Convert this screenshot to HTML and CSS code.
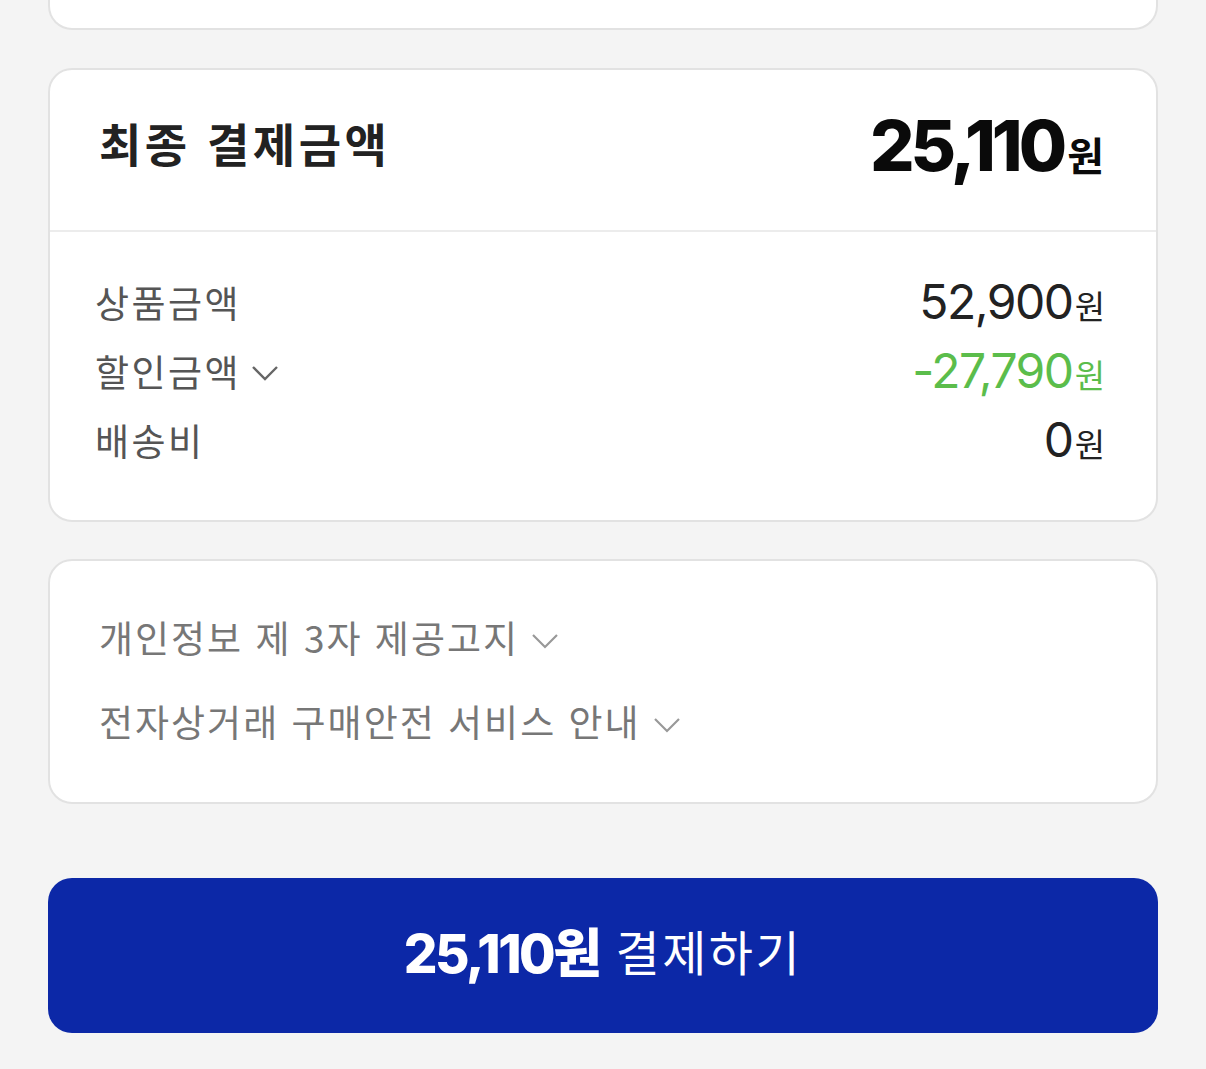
FILE: index.html
```html
<!DOCTYPE html>
<html lang="ko">
<head>
<meta charset="utf-8">
<link rel="stylesheet" href="styles.css">
</head>
<body>
<div class="page">
  <div class="card card-top"></div>

  <div class="card summary">
    <div class="summary-head">
      <span class="head-title">최종 결제금액</span>
      <span class="head-amount"><span class="num">25,110</span><span class="won">원</span></span>
    </div>
    <div class="summary-body">
      <div class="row">
        <span class="label">상품금액</span>
        <span class="value"><span class="num">52,900</span><span class="won">원</span></span>
      </div>
      <div class="row">
        <span class="label">할인금액<svg class="chev" viewBox="0 0 28 18" width="28" height="18"><path d="M2 3 L14 15 L26 3" fill="none" stroke="#666" stroke-width="2.4"/></svg></span>
        <span class="value green"><span class="num">-27,790</span><span class="won">원</span></span>
      </div>
      <div class="row">
        <span class="label">배송비</span>
        <span class="value"><span class="num">0</span><span class="won">원</span></span>
      </div>
    </div>
  </div>

  <div class="card notices">
    <div class="notice">개인정보 제 3자 제공고지<svg class="chev light" viewBox="0 0 28 18" width="28" height="18"><path d="M2 3 L14 15 L26 3" fill="none" stroke="#999" stroke-width="2.2"/></svg></div>
    <div class="notice">전자상거래 구매안전 서비스 안내<svg class="chev light" viewBox="0 0 28 18" width="28" height="18"><path d="M2 3 L14 15 L26 3" fill="none" stroke="#999" stroke-width="2.2"/></svg></div>
  </div>

  <button class="pay"><span class="pay-amt">25,110원</span><span class="pay-txt">결제하기</span></button>
</div>
</body>
</html>
```

FILE: styles.css
```css
html, body {
  margin: 0;
  padding: 0;
  background: #f4f4f4;
}
body {
  font-family: "Noto Sans CJK KR", "Noto Sans", sans-serif;
  width: 1206px;
  height: 1069px;
  overflow: hidden;
}
.page {
  display: flex;
  flex-direction: column;
  padding: 0 48px;
}
.card {
  background: #fff;
  border: 2px solid #e2e2e2;
  border-radius: 24px;
}
.card-top {
  height: 28px;
  border-top: none;
  border-radius: 0 0 24px 24px;
}
.summary {
  margin-top: 38px;
}
.summary-head {
  height: 160px;
  display: flex;
  align-items: center;
  justify-content: space-between;
  padding: 0 52px 0 49px;
  border-bottom: 2px solid #ececec;
}
.head-title {
  font-size: 46px;
  font-weight: 700;
  color: #222;
  letter-spacing: 3.5px;
  margin-top: -16px;
}
.head-amount {
  display: flex;
  align-items: baseline;
  color: #0a0a0a;
  margin-top: -10px;
}
.head-amount .num {
  font-family: Inter, "Noto Sans", sans-serif;
  font-size: 70px;
  font-weight: 800;
  letter-spacing: -4px;
}
.head-amount .won {
  font-size: 40px;
  font-weight: 700;
  margin-left: 4px;
}
.summary-body {
  padding: 35px 51px 46px 45px;
}
.row {
  display: flex;
  align-items: center;
  justify-content: space-between;
  height: 69px;
}
.label {
  display: flex;
  align-items: center;
  font-size: 37px;
  color: #555;
  letter-spacing: 2.5px;
}
.chev {
  margin-left: 10px;
  margin-top: 4px;
}
.value {
  display: flex;
  align-items: baseline;
  color: #222;
}
.value .num {
  font-family: Inter, "Noto Sans", sans-serif;
  font-size: 48px;
  font-weight: 400;
  letter-spacing: -1.5px;
}
.value .won {
  font-size: 33px;
  margin-left: 2px;
}
.green {
  color: #5bbd4b;
}
.notices {
  margin-top: 37px;
  padding: 34px 50px 39px 49px;
}
.notice {
  display: flex;
  align-items: center;
  height: 84px;
  font-size: 37px;
  color: #777;
  letter-spacing: 2px;
}
.notice .chev {
  margin-left: 12px;
  margin-top: 8px;
}
.pay {
  margin-top: 74px;
  height: 155px;
  border: none;
  border-radius: 24px;
  background: #0c28a7;
  color: #fff;
  display: flex;
  align-items: center;
  justify-content: center;
  font-family: "Noto Sans CJK KR", "Noto Sans", sans-serif;
  padding: 0 0 12px 0;
}
.pay-amt {
  font-family: Inter, "Noto Sans CJK KR", sans-serif;
  font-size: 53px;
  font-weight: 800;
  letter-spacing: -2.5px;
}
.pay-txt {
  font-size: 48px;
  font-weight: 400;
  margin-left: 16px;
  letter-spacing: 2.5px;
}
```
